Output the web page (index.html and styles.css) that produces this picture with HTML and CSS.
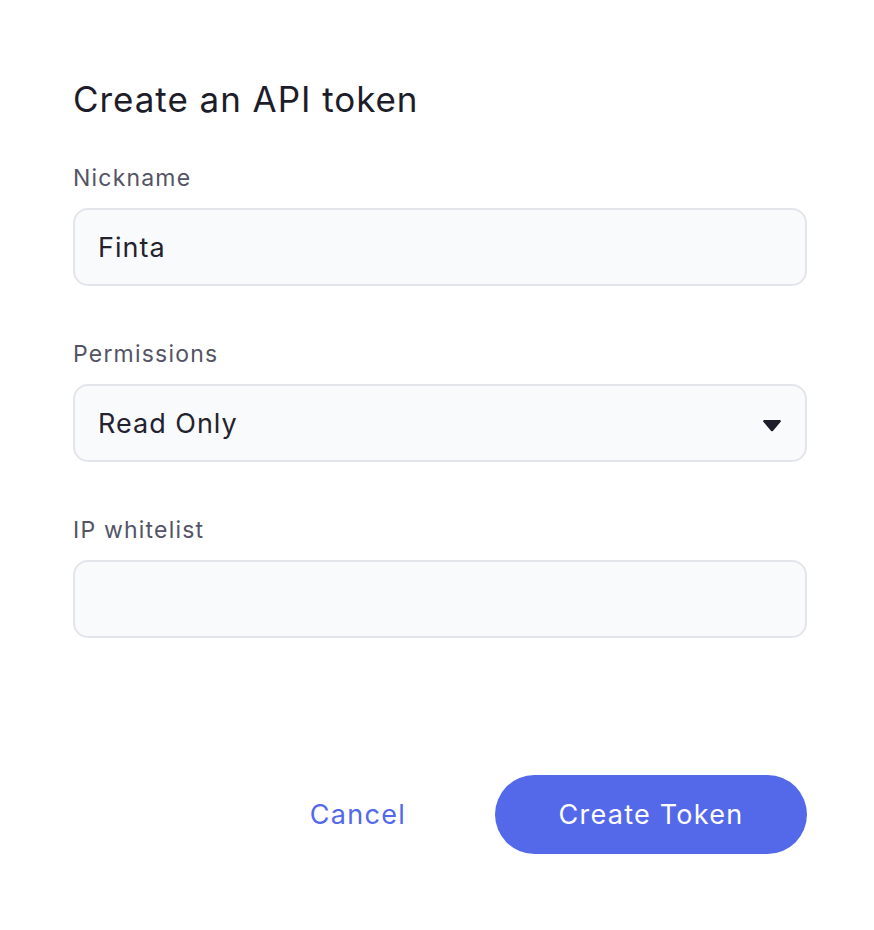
FILE: index.html
```html
<!DOCTYPE html>
<html lang="en">
<head>
<meta charset="utf-8">
<title>Create an API token</title>
<link rel="stylesheet" href="styles.css">
</head>
<body>
<div class="dialog">
  <h1 class="title">Create an API token</h1>
  <div class="field">
    <label class="label">Nickname</label>
    <div class="input">Finta</div>
  </div>
  <div class="field">
    <label class="label">Permissions</label>
    <div class="input select">
      <span>Read Only</span>
      <svg class="caret" width="20" height="13" viewBox="0 0 20 13"><path d="M2.2 1h15.6c1 0 1.5 1.1.9 1.8l-7.8 9.1c-.5.5-1.3.5-1.8 0L1.3 2.8C.7 2.1 1.2 1 2.2 1z" fill="#1e1e2a"/></svg>
    </div>
  </div>
  <div class="field">
    <label class="label">IP whitelist</label>
    <div class="input"></div>
  </div>
  <div class="actions">
    <button class="btn-cancel">Cancel</button>
    <button class="btn-primary">Create Token</button>
  </div>
</div>
</body>
</html>
```
FILE: styles.css
```css
html, body {
  margin: 0;
  padding: 0;
  background: #ffffff;
}
body {
  font-family: Inter, "Noto Sans", sans-serif;
  color: #1f1f2b;
  letter-spacing: 0.04em;
}
.dialog {
  width: 734px;
  padding: 79px 0 0 73px;
  display: flex;
  flex-direction: column;
}
.title {
  margin: 0;
  font-size: 35px;
  line-height: 40px;
  font-weight: 400;
  color: #1d1d29;
  letter-spacing: 0.95px;
}
.field {
  display: flex;
  flex-direction: column;
  gap: 15px;
  margin-top: 44px;
}
.field + .field {
  margin-top: 53px;
}
.label {
  font-size: 23px;
  line-height: 30px;
  color: #545465;
  letter-spacing: 1.2px;
}
.input {
  box-sizing: border-box;
  height: 78px;
  border: 2px solid #e4e5ea;
  border-radius: 15px;
  background: #f9fafc;
  padding: 0 23px;
  display: flex;
  align-items: center;
  font-size: 27px;
  color: #23232f;
  letter-spacing: 1px;
}
.select {
  justify-content: space-between;
  padding-right: 23px;
}
.caret {
  display: block;
  margin-top: 4px;
}
.actions {
  margin-top: 137px;
  display: flex;
  justify-content: flex-end;
  align-items: center;
  gap: 42px;
}
button {
  font-family: inherit;
  border: none;
  cursor: pointer;
}
.btn-cancel {
  background: none;
  color: #5369e9;
  font-size: 27px;
  letter-spacing: 1.3px;
  width: 190px;
  height: 79px;
  padding: 0;
}
.btn-primary {
  width: 312px;
  height: 79px;
  border-radius: 40px;
  background: #5469ea;
  color: #ffffff;
  font-size: 27px;
  letter-spacing: 1.25px;
  padding: 0;
}
```
